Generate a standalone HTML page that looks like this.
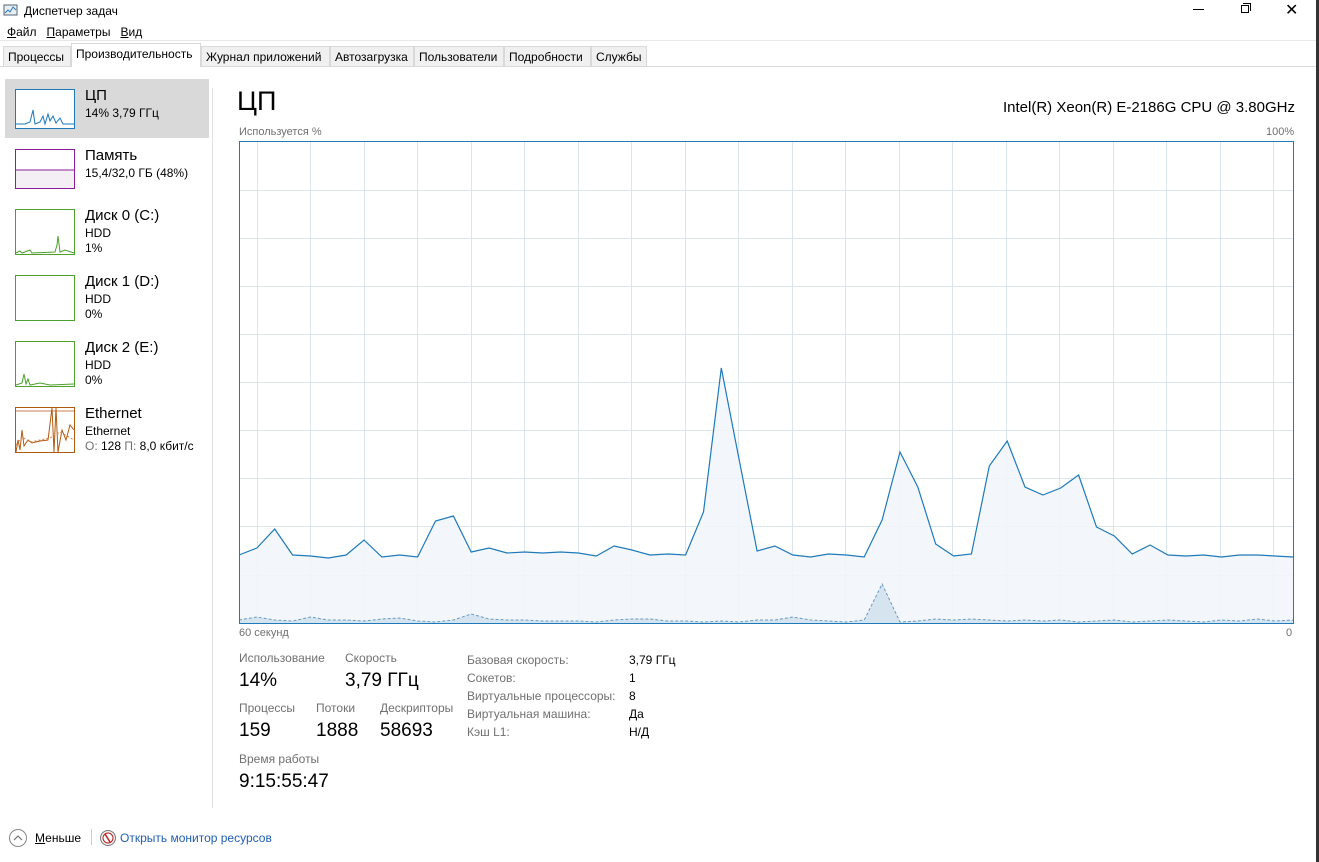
<!DOCTYPE html>
<html><head><meta charset="utf-8"><style>
*{margin:0;padding:0;box-sizing:border-box}
body{width:1319px;height:862px;background:#fff;font-family:"Liberation Sans",sans-serif;color:#000;position:relative;overflow:hidden;font-size:12px}
.a{position:absolute;white-space:nowrap}
.g{color:#707070}
.tab{position:absolute;top:46px;height:21px;border:1px solid #d9d9d9;background:#f0f0f0;font-size:12px;padding:3px 4px 0 4px}
u{text-decoration:underline}
</style></head><body>
<div style="position:absolute;right:0;top:0;width:3px;height:862px;background:#333"></div>
<svg class="a" style="left:3px;top:3px" width="16" height="16"><rect x="1" y="2" width="13" height="10" fill="#e8eef4" stroke="#567"/><polyline points="2,10 5,7 7,9 10,4 13,7" fill="none" stroke="#2a7ab8"/></svg>
<div class="a" style="left:24px;top:4px">Диспетчер задач</div>
<div class="a" style="left:1193px;top:9px;width:11px;height:1px;background:#000"></div>
<div class="a" style="left:1241px;top:5px;width:8px;height:8px;border:1px solid #000;background:#fff"></div>
<div class="a" style="left:1243px;top:3px;width:8px;height:8px;border-top:1px solid #000;border-right:1px solid #000"></div>
<div class="a" style="left:1285px;top:0px;font-size:16px">✕</div>
<div class="a" style="left:7px;top:25px"><u>Ф</u>айл&nbsp;&nbsp; <u>П</u>араметры&nbsp;&nbsp; <u>В</u>ид</div>
<div class="a" style="left:0;top:40px;width:1316px;height:1px;background:#e8e8e8"></div>
<div class="a" style="left:0;top:66px;width:1316px;height:1px;background:#d9d9d9"></div>
<div class="tab" style="left:3px;width:68px">Процессы</div>
<div class="tab" style="left:71px;top:43px;height:24px;width:130px;background:#fff;border-bottom:none">Производительность</div>
<div class="tab" style="left:201px;width:129px">Журнал приложений</div>
<div class="tab" style="left:330px;width:84px">Автозагрузка</div>
<div class="tab" style="left:414px;width:90px">Пользователи</div>
<div class="tab" style="left:504px;width:87px">Подробности</div>
<div class="tab" style="left:591px;width:56px">Службы</div>

<div class="a" style="left:5px;top:79px;width:204px;height:59px;background:#d9d9d9"></div>
<div class="a" style="left:212px;top:88px;width:1px;height:720px;background:#e0e0e0"></div>
<svg class="a" style="left:0;top:0" width="220" height="460">
<rect x="15.5" y="89.5" width="59" height="39" fill="#fff" stroke="#1e7ab8"/>
<polyline points="16,124 25,124 30,122 33,110 35,124 40,122 43,116 45,124 48,114 50,121 53,116 56,123 60,118 63,124 74,124" fill="none" stroke="#1e7ab8"/>
<rect x="15.5" y="149.5" width="59" height="39" fill="#f4eff5" stroke="#8b1d9b"/>
<rect x="16" y="150" width="58" height="20" fill="#fff"/>
<line x1="16" y1="170" x2="74" y2="170" stroke="#8b1d9b"/>
<rect x="15.5" y="209.5" width="59" height="45" fill="#fff" stroke="#4da02c"/>
<polyline points="16,253 20,251 22,253 30,250 32,253 55,252 57,245 58,236 60,252 65,250 74,253" fill="none" stroke="#4da02c"/>
<rect x="15.5" y="275.5" width="59" height="45" fill="#fff" stroke="#4da02c"/>
<rect x="15.5" y="341.5" width="59" height="45" fill="#fff" stroke="#4da02c"/>
<polyline points="16,385 22,383 24,374 26,384 28,379 30,385 40,383 50,385 74,384" fill="none" stroke="#4da02c"/>
<rect x="15.5" y="407.5" width="59" height="45" fill="#fff" stroke="#b05a10"/>
<line x1="16" y1="411" x2="74" y2="411" stroke="#c98050"/>
<polyline points="16,452 18,440 20,450 22,430 24,446 28,440 32,443 40,441 48,440 52,408 54,452 56,408 58,452 62,430 66,440 70,425 74,430" fill="none" stroke="#b05a10"/>
<polyline points="16,445 22,437 30,442 40,440 50,438 60,432 74,440" fill="none" stroke="#d48040" stroke-dasharray="2,2"/>
</svg>
<div class="a" style="left:85px;top:87px;font-size:15px">ЦП</div>
<div class="a" style="left:85px;top:106px">14% 3,79 ГГц</div>
<div class="a" style="left:85px;top:147px;font-size:15px">Память</div>
<div class="a" style="left:85px;top:166px">15,4/32,0 ГБ (48%)</div>
<div class="a" style="left:85px;top:207px;font-size:15px">Диск 0 (C:)</div>
<div class="a" style="left:85px;top:226px">HDD</div><div class="a" style="left:85px;top:241px">1%</div>
<div class="a" style="left:85px;top:273px;font-size:15px">Диск 1 (D:)</div>
<div class="a" style="left:85px;top:292px">HDD</div><div class="a" style="left:85px;top:307px">0%</div>
<div class="a" style="left:85px;top:339px;font-size:15px">Диск 2 (E:)</div>
<div class="a" style="left:85px;top:358px">HDD</div><div class="a" style="left:85px;top:373px">0%</div>
<div class="a" style="left:85px;top:405px;font-size:15px">Ethernet</div>
<div class="a" style="left:85px;top:424px">Ethernet</div>
<div class="a" style="left:85px;top:439px"><span class="g">О:</span> 128 <span class="g">П:</span> 8,0 кбит/с</div>

<div class="a" style="left:237px;top:86px;font-size:27px">ЦП</div>
<div class="a" style="left:1003px;top:99px;font-size:15px;right:26px">Intel(R) Xeon(R) E-2186G CPU @ 3.80GHz</div>
<div class="a g" style="left:239px;top:126px;font-size:11px">Используется %</div>
<div class="a g" style="left:1266px;top:126px;font-size:11px">100%</div>
<svg class="a" style="left:0;top:0" width="1319" height="640">
<g stroke="#d9e6f0" stroke-width="1">
<line x1="239" y1="190.5" x2="1293" y2="190.5"/><line x1="239" y1="238.5" x2="1293" y2="238.5"/><line x1="239" y1="286.5" x2="1293" y2="286.5"/><line x1="239" y1="334.5" x2="1293" y2="334.5"/><line x1="239" y1="382.5" x2="1293" y2="382.5"/><line x1="239" y1="430.5" x2="1293" y2="430.5"/><line x1="239" y1="478.5" x2="1293" y2="478.5"/><line x1="239" y1="526.5" x2="1293" y2="526.5"/><line x1="239" y1="575.5" x2="1293" y2="575.5"/>
<line x1="257.5" y1="142" x2="257.5" y2="623"/><line x1="310.5" y1="142" x2="310.5" y2="623"/><line x1="364.5" y1="142" x2="364.5" y2="623"/><line x1="417.5" y1="142" x2="417.5" y2="623"/><line x1="471.5" y1="142" x2="471.5" y2="623"/><line x1="524.5" y1="142" x2="524.5" y2="623"/><line x1="578.5" y1="142" x2="578.5" y2="623"/><line x1="631.5" y1="142" x2="631.5" y2="623"/><line x1="685.5" y1="142" x2="685.5" y2="623"/><line x1="738.5" y1="142" x2="738.5" y2="623"/><line x1="792.5" y1="142" x2="792.5" y2="623"/><line x1="845.5" y1="142" x2="845.5" y2="623"/><line x1="899.5" y1="142" x2="899.5" y2="623"/><line x1="952.5" y1="142" x2="952.5" y2="623"/><line x1="1006.5" y1="142" x2="1006.5" y2="623"/><line x1="1059.5" y1="142" x2="1059.5" y2="623"/><line x1="1113.5" y1="142" x2="1113.5" y2="623"/><line x1="1166.5" y1="142" x2="1166.5" y2="623"/><line x1="1220.5" y1="142" x2="1220.5" y2="623"/><line x1="1273.5" y1="142" x2="1273.5" y2="623"/>
</g>
<polygon fill="#f1f6fa" points="239,623 239,555 256.9,548 274.7,529 292.6,555 310.5,556 328.3,558 346.2,555 364,540 381.9,557 399.8,555 417.6,557 435.5,521 453.4,516 471.2,552 489.1,548 507,553 524.8,552 542.7,553 560.6,552 578.4,553 596.3,556 614.1,546 632,550 649.9,555 667.7,554 685.6,555 703.5,512 721.3,368 739.2,460 757.1,551 774.9,546 792.8,555 810.6,557 828.5,554 846.4,555 864.2,557 882.1,520 900,452 917.8,487 935.7,544 953.6,556 971.4,554 989.3,466 1007.2,441 1025,487 1042.9,495 1060.7,488 1078.6,475 1096.5,527 1114.3,536 1132.2,554 1150.1,545 1167.9,555 1185.8,556 1203.7,555 1221.5,557 1239.4,555 1257.3,555 1275.1,556 1293,557 1293,623" fill-opacity="0.85"/>
<polyline fill="none" stroke="#1e7ab8" stroke-width="1.2" points="239,555 256.9,548 274.7,529 292.6,555 310.5,556 328.3,558 346.2,555 364,540 381.9,557 399.8,555 417.6,557 435.5,521 453.4,516 471.2,552 489.1,548 507,553 524.8,552 542.7,553 560.6,552 578.4,553 596.3,556 614.1,546 632,550 649.9,555 667.7,554 685.6,555 703.5,512 721.3,368 739.2,460 757.1,551 774.9,546 792.8,555 810.6,557 828.5,554 846.4,555 864.2,557 882.1,520 900,452 917.8,487 935.7,544 953.6,556 971.4,554 989.3,466 1007.2,441 1025,487 1042.9,495 1060.7,488 1078.6,475 1096.5,527 1114.3,536 1132.2,554 1150.1,545 1167.9,555 1185.8,556 1203.7,555 1221.5,557 1239.4,555 1257.3,555 1275.1,556 1293,557"/>
<polygon fill="#d6e4ef" points="239,623 239,620 256.9,617 274.7,620 292.6,621 310.5,617 328.3,620 346.2,620 364,621 381.9,619 399.8,618 417.6,621 435.5,622 453.4,620 471.2,614 489.1,619 507,620 524.8,620 542.7,621 560.6,621 578.4,621 596.3,622 614.1,620 632,619 649.9,619 667.7,621 685.6,621 703.5,622 721.3,621 739.2,622 757.1,620 774.9,620 792.8,617 810.6,620 828.5,621 846.4,622 864.2,620 882.1,584 900,622 917.8,621 935.7,619 953.6,620 971.4,619 989.3,620 1007.2,621 1025,620 1042.9,621 1060.7,620 1078.6,622 1096.5,621 1114.3,620 1132.2,622 1150.1,621 1167.9,620 1185.8,621 1203.7,622 1221.5,620 1239.4,621 1257.3,619 1275.1,621 1293,620 1293,623"/>
<polyline fill="none" stroke="#6a9cc4" stroke-dasharray="3,2" points="239,620 256.9,617 274.7,620 292.6,621 310.5,617 328.3,620 346.2,620 364,621 381.9,619 399.8,618 417.6,621 435.5,622 453.4,620 471.2,614 489.1,619 507,620 524.8,620 542.7,621 560.6,621 578.4,621 596.3,622 614.1,620 632,619 649.9,619 667.7,621 685.6,621 703.5,622 721.3,621 739.2,622 757.1,620 774.9,620 792.8,617 810.6,620 828.5,621 846.4,622 864.2,620 882.1,584 900,622 917.8,621 935.7,619 953.6,620 971.4,619 989.3,620 1007.2,621 1025,620 1042.9,621 1060.7,620 1078.6,622 1096.5,621 1114.3,620 1132.2,622 1150.1,621 1167.9,620 1185.8,621 1203.7,622 1221.5,620 1239.4,621 1257.3,619 1275.1,621 1293,620"/>
<rect x="239.5" y="141.5" width="1054" height="482" fill="none" stroke="#1e7ab8"/>
</svg>
<div class="a g" style="left:239px;top:627px;font-size:11px">60 секунд</div>
<div class="a g" style="left:1286px;top:627px;font-size:11px">0</div>

<div class="a g" style="left:239px;top:651px">Использование</div>
<div class="a g" style="left:345px;top:651px">Скорость</div>
<div class="a" style="left:239px;top:670px;font-size:19px">14%</div>
<div class="a" style="left:345px;top:670px;font-size:19px">3,79 ГГц</div>
<div class="a g" style="left:239px;top:701px">Процессы</div>
<div class="a g" style="left:316px;top:701px">Потоки</div>
<div class="a g" style="left:380px;top:701px">Дескрипторы</div>
<div class="a" style="left:239px;top:720px;font-size:19px">159</div>
<div class="a" style="left:316px;top:720px;font-size:19px">1888</div>
<div class="a" style="left:380px;top:720px;font-size:19px">58693</div>
<div class="a g" style="left:239px;top:752px">Время работы</div>
<div class="a" style="left:239px;top:771px;font-size:19px">9:15:55:47</div>
<div class="a g" style="left:467px;top:651px;line-height:18px">Базовая скорость:<br>Сокетов:<br>Виртуальные процессоры:<br>Виртуальная машина:<br>Кэш L1:</div>
<div class="a" style="left:629px;top:651px;line-height:18px">3,79 ГГц<br>1<br>8<br>Да<br>Н/Д</div>

<svg class="a" style="left:8px;top:828px" width="20" height="20"><circle cx="10" cy="10" r="8.5" fill="#fff" stroke="#888"/><polyline points="6,12 10,8 14,12" fill="none" stroke="#666"/></svg>
<div class="a" style="left:35px;top:831px"><u>М</u>еньше</div>
<div class="a" style="left:91px;top:829px;width:1px;height:16px;background:#ccc"></div>
<svg class="a" style="left:99px;top:829px" width="18" height="18"><circle cx="9" cy="9" r="7.5" fill="#eee" stroke="#777"/><circle cx="9" cy="9" r="5" fill="#fff" stroke="#b22"/><line x1="6" y1="5" x2="11" y2="13" stroke="#b22" stroke-width="1.5"/></svg>
<div class="a" style="left:120px;top:831px;color:#1f5fb0">Открыть монитор ресурсов</div>
</body></html>
